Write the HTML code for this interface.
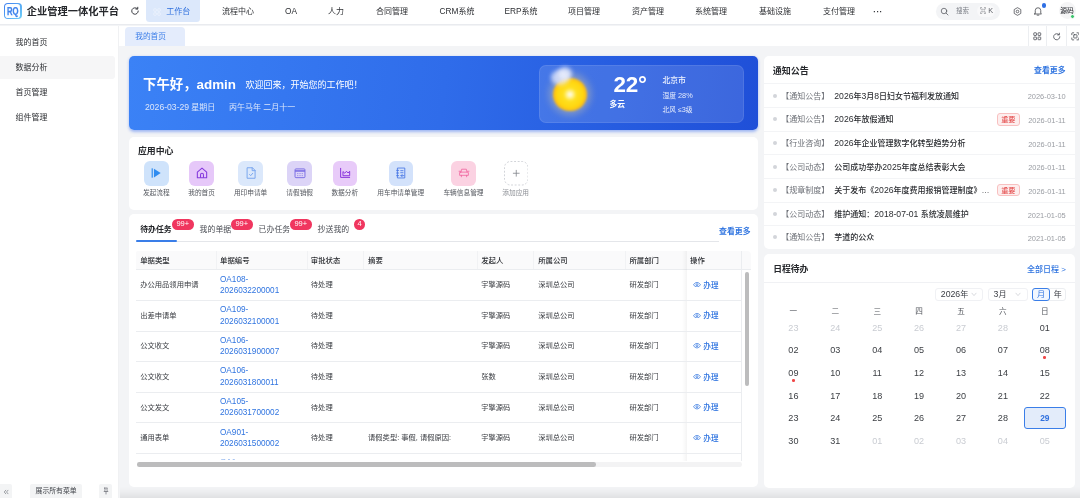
<!DOCTYPE html>
<html lang="zh-CN">
<head>
<meta charset="utf-8">
<title>企业管理一体化平台</title>
<style>
*{box-sizing:border-box;margin:0;padding:0}
html,body{width:1080px;height:498px;overflow:hidden;background:#f3f4f6}
body{font-family:"Liberation Sans","Noto Sans CJK SC",sans-serif;font-size:8px;color:#303133;position:relative}
.abs{position:absolute}
/* header */
#hdr{position:absolute;left:0;top:0;width:1080px;height:25.3px;background:#fff;border-bottom:1px solid #e9ebef}
#logo{position:absolute;left:4.2px;top:2.9px;width:17.5px;height:16.1px;border-radius:4px;background:linear-gradient(135deg,#3b7cf0,#72d2f8);}
#logo i{position:absolute;left:1.3px;top:1.3px;right:1.3px;bottom:1.3px;border-radius:2.8px;background:#fafdff}
#logo b{position:absolute;left:-1px;right:-1px;top:0;text-align:center;font-size:10px;line-height:16.8px;font-weight:bold;font-style:normal;transform:translateY(0.7px) scaleX(.77);color:#3f83ec;-webkit-text-stroke:0.25px #3f83ec}
#title{position:absolute;left:26.8px;top:0.6px;height:22px;line-height:22px;font-size:10.25px;font-weight:bold;color:#26282c;letter-spacing:0px;white-space:nowrap}
.nav .n{font-size:104%}
.nav{position:absolute;top:0.7px;height:22px;line-height:22px;font-size:8px;color:#2d2f33;text-align:center;white-space:nowrap;transform:translateX(-50%)}
#navact{position:absolute;left:146.3px;top:-4px;width:53.7px;height:26px;background:#dce8fb;border-radius:3.5px}
/* sidebar */
#side{position:absolute;left:0;top:25.5px;width:119.3px;height:473px;background:#fff;border-right:0.6px solid #f0f1f3}
.mi{position:absolute;left:0;width:114.5px;height:23.5px;line-height:23.5px;padding-left:15.5px;font-size:8px;color:#2d2f33;border-radius:0 3px 3px 0}
#sidefoot{position:absolute;left:0;top:484px;width:119px;height:14px;background:#fbfbfc;border-top:1px solid #f0f1f3}
/* tabs */
#tabs{position:absolute;left:119px;top:25.5px;width:961px;height:20.5px;background:#fff}
#tab1{position:absolute;left:125.4px;top:27.2px;width:59.2px;height:19px;background:#e4ecfc;border-radius:4px 4px 0 0;color:#3b7de8;font-size:7.7px;line-height:20.4px;padding-left:9.800px}
#tab1:before,#tab1:after{content:"";position:absolute;bottom:0;width:2.5px;height:2.5px}
#tab1:before{left:-2.5px;background:radial-gradient(circle at 0 0,rgba(228,236,252,0) 2.4px,#e4ecfc 2.6px)}
#tab1:after{right:-2.5px;background:radial-gradient(circle at 100% 0,rgba(228,236,252,0) 2.4px,#e4ecfc 2.6px)}
.card{position:absolute;background:#fff;border-radius:5px}
/*EXTRA*/
.ic{position:absolute;top:161.200px;width:24.5px;height:24.500px;border-radius:6px;display:flex;align-items:center;justify-content:center}
.il{position:absolute;top:186.900px;line-height:12px;font-size:6.7px;color:#55585f;white-space:nowrap;transform:translateX(-50%)}
.bdg{position:absolute;top:219.400px;height:10.500px;border-radius:5.300px;background:#f0365f;color:#fff;font-size:7.5px;line-height:10.6px;text-align:center}
.th{position:absolute;top:254.6px;line-height:12px;font-size:7.4px;font-weight:500;color:#2e3035;white-space:nowrap}
.td{position:absolute;line-height:12px;font-size:7.3px;color:#383b40;white-space:nowrap}
.lk{position:absolute;line-height:11.6px;font-size:7.6px;color:#2f74e0;white-space:nowrap}
.sel{top:287.6px;height:13.4px;border:0.7px solid #f0f1f4;border-radius:3px;background:#fff;line-height:12.6px;font-size:8.1px;color:#3a3d43;padding-left:4.6px}
.n{font-size:108%;line-height:0}
.cd{position:absolute;line-height:13px;font-size:8.400px;white-space:nowrap;transform:translateX(-50%)}
/*ENDEXTRA*/</style>
</head>
<body>
<div id="root" style="position:absolute;left:0;top:0;width:1080px;height:498px;will-change:transform">
<div id="hdr">
  <div id="logo"><i></i><b>RQ</b></div>
  <div id="title">企业管理一体化平台</div>
  <svg class="abs" style="left:130px;top:6.1px" width="10" height="10" viewBox="0 0 20 20" fill="none" stroke="#3a3c42" stroke-width="2" stroke-linecap="round" stroke-linejoin="round"><path d="M16.5 10a6.5 6.5 0 1 1-2-4.7"/><path d="M15.5 2.5v3.6h-3.6"/></svg>
  <div id="navact"></div>
  <svg class="abs" style="left:153px;top:7.5px" width="8" height="8" viewBox="0 0 16 16" fill="none" stroke="#eef4fe" stroke-width="1.6"><rect x="1.5" y="1.5" width="5" height="5" rx="1"/><rect x="9.500" y="1.500" width="5" height="5" rx="1"/><rect x="1.500" y="9.500" width="5" height="5" rx="1"/><rect x="9.500" y="9.500" width="5" height="5" rx="1"/></svg>
  <div class="nav" style="left:178.300px;color:#2f70de">工作台</div>
  <div class="nav" style="left:238px">流程中心</div>
  <div class="nav" style="left:291px"><span class="n">OA</span></div>
  <div class="nav" style="left:336px">人力</div>
  <div class="nav" style="left:392px">合同管理</div>
  <div class="nav" style="left:457px"><span class="n">CRM</span>系统</div>
  <div class="nav" style="left:521px"><span class="n">ERP</span>系统</div>
  <div class="nav" style="left:584px">项目管理</div>
  <div class="nav" style="left:648px">资产管理</div>
  <div class="nav" style="left:711px">系统管理</div>
  <div class="nav" style="left:775px">基础设施</div>
  <div class="nav" style="left:839px">支付管理</div>
  <div class="nav" style="left:878px;font-weight:bold;letter-spacing:0.5px">···</div>
  <div class="abs" style="left:936px;top:2.5px;width:64px;height:17px;border-radius:9px;background:#f3f4f6"></div>
  <svg class="abs" style="left:940.2px;top:6.8px" width="9" height="9" viewBox="0 0 18 18" fill="none" stroke="#55585f" stroke-width="1.5" stroke-linecap="round"><circle cx="8" cy="8" r="5.5"/><path d="M12.2 12.2 16 16"/></svg>
  <div class="abs" style="left:956px;top:0;line-height:22px;font-size:6.5px;color:#7d8088">搜索</div>
  <div class="abs" style="left:977px;top:5px;width:18px;height:12px;border-radius:6px;background:#f9f9fa"></div>
  <div class="abs" style="left:979.8px;top:0;line-height:22.5px;font-size:6.6px;color:#62656c">⌘</div>
  <div class="abs" style="left:988.3px;top:0;line-height:22.5px;font-size:6.8px;color:#62656c"><span class="n">K</span></div>
  <svg class="abs" style="left:1013px;top:6.5px" width="9" height="9" viewBox="0 0 18 18" fill="none" stroke="#45474d" stroke-width="1.5" stroke-linejoin="round"><path d="M9 1.3 15.6 5.1v7.8L9 16.7 2.4 12.9V5.1z"/><circle cx="9" cy="9" r="2.6"/></svg>
  <svg class="abs" style="left:1033px;top:6px" width="10" height="10" viewBox="0 0 20 20" fill="none" stroke="#45474d" stroke-width="1.6" stroke-linecap="round" stroke-linejoin="round"><path d="M4.5 14.5V9a5.5 5.500 0 0 1 11 0v5.500l1.500 1.500H3z"/><path d="M8.300 18.300h3.400"/></svg>
  <div class="abs" style="left:1042px;top:3.3px;width:4.4px;height:4.4px;border-radius:50%;background:#2f6fe4"></div>
  <div class="abs" style="left:1058.5px;top:2px;width:17px;height:17px;border-radius:50%;background:#f5f5f6"></div>
  <div class="abs" style="left:1060.3px;top:0;line-height:22.5px;font-size:6.8px;font-weight:500;color:#33353a">源码</div>
  <div class="abs" style="left:1070.2px;top:14.3px;width:4.8px;height:4.8px;border-radius:50%;background:#3fc56f;border:0.500px solid #fff"></div>
</div>

<div id="side">
</div>
<div class="mi" style="top:30.500px">我的首页</div>
<div class="mi" style="top:55.5px;background:#f6f6f7">数据分析</div>
<div class="mi" style="top:80.500px">首页管理</div>
<div class="mi" style="top:105.500px">组件管理</div>
<div class="abs" style="left:0;top:484.4px;width:12.2px;height:13.6px;background:#f3f4f5;border-radius:0 2px 0 0"></div>
<svg class="abs" style="left:3.2px;top:488.6px" width="6" height="6" viewBox="0 0 12 12" fill="none" stroke="#6b6e75" stroke-width="1.300" stroke-linecap="round" stroke-linejoin="round"><path d="M5.500 2.500 2.500 6l3 3.500M10 2.500 7 6l3 3.500"/></svg>
<div class="abs" style="left:30px;top:484.400px;width:52.200px;height:13.600px;background:#f3f4f5;border-radius:2px 2px 0 0;line-height:14.500px;text-align:center;font-size:6.850px;color:#3c3f45">展示所有菜单</div>
<div class="abs" style="left:98.900px;top:484.400px;width:13.300px;height:13.600px;background:#f3f4f5;border-radius:2px 2px 0 0"></div>
<svg class="abs" style="left:101.500px;top:487.300px" width="8" height="8" viewBox="0 0 16 16" fill="none" stroke="#5f6269" stroke-width="1.300" stroke-linejoin="round" stroke-linecap="round"><path d="M5 2h6l-1 1.500v3l2 2.500H4l2-2.500v-3z"/><path d="M8 9v5"/></svg>

<div id="tabs"></div>
<div id="tab1">我的首页</div>
<div class="abs" style="left:1028px;top:26px;width:1px;height:20px;background:#eceef1"></div>
<div class="abs" style="left:1046px;top:26px;width:1px;height:20px;background:#eceef1"></div>
<div class="abs" style="left:1066px;top:26px;width:1px;height:20px;background:#eceef1"></div>
<svg class="abs" style="left:1033px;top:32px" width="8.5" height="8.5" viewBox="0 0 16 16" fill="none" stroke="#4a4d54" stroke-width="1.5"><rect x="1.500" y="1.500" width="5" height="5" rx="0.800"/><rect x="9.500" y="1.500" width="5" height="5" rx="0.800"/><rect x="1.500" y="9.500" width="5" height="5" rx="0.800"/><rect x="9.500" y="9.500" width="5" height="5" rx="0.800"/></svg>
<svg class="abs" style="left:1051.5px;top:31.5px" width="9.5" height="9.5" viewBox="0 0 20 20" fill="none" stroke="#4a4d54" stroke-width="1.7" stroke-linecap="round" stroke-linejoin="round"><path d="M16.500 10a6.500 6.500 0 1 1-2-4.700"/><path d="M15.500 2.500v3.600h-3.600"/></svg>
<svg class="abs" style="left:1070.7px;top:32px" width="8.7" height="8.7" viewBox="0 0 16 16" fill="none" stroke="#4a4d54" stroke-width="1.5" stroke-linecap="round"><path d="M1.500 5V2.500a1 1 0 0 1 1-1H5M11 1.500h2.500a1 1 0 0 1 1 1V5M14.500 11v2.500a1 1 0 0 1-1 1H11M5 14.500H2.500a1 1 0 0 1-1-1V11"/><rect x="5" y="5" width="6" height="6" rx="1"/></svg>

<div id="btm" class="abs" style="left:119.500px;top:487px;width:960.500px;height:11px;background:linear-gradient(180deg,rgba(0,0,0,0) 0%,rgba(0,0,0,.025) 40%,rgba(0,0,0,.075) 100%)"></div>
<!--MAINSTART--><!-- banner -->
<div class="abs" id="banner" style="left:129px;top:56px;width:628.5px;height:74px;border-radius:5px;background:linear-gradient(97deg,#3b82f6 0%,#2f6cea 50%,#1f4fd8 100%);box-shadow:0 1.5px 3px rgba(60,110,240,.45)"></div>
<div class="abs" style="left:143px;top:74.5px;line-height:19px;font-size:13.4px;font-weight:bold;color:#fff;white-space:nowrap">下午好，admin</div>
<div class="abs" style="left:245.5px;top:78px;line-height:15px;font-size:9px;color:#fff;white-space:nowrap">欢迎回来，开始您的工作吧！</div>
<div class="abs" style="left:145px;top:101px;line-height:14px;font-size:8px;color:#dbe6fb;white-space:nowrap"><span class="n">2026-03-29</span> 星期日</div>
<div class="abs" style="left:229px;top:101px;line-height:14px;font-size:8px;color:#dbe6fb;white-space:nowrap">丙午马年 二月十一</div>
<div class="abs" style="left:539px;top:65px;width:205px;height:57.5px;border-radius:7px;background:rgba(255,255,255,.13);border:0.5px solid rgba(255,255,255,.09)"></div>
<div class="abs" style="left:549px;top:73px;width:42px;height:42px;border-radius:50%;background:rgba(255,225,140,.32);filter:blur(3.5px)"></div>
<div class="abs" style="left:553.4px;top:77.500px;width:33.400px;height:33.400px;border-radius:50%;background:radial-gradient(circle,#ffffff 0%,#fff3a0 12%,#ffe020 28%,#ffd60f 56%,#fbb818 70%,#f6a520 82%,#f4a128 100%);filter:blur(1px)"></div>
<div class="abs" style="left:550.500px;top:69.500px;width:18px;height:15px;border-radius:50%;background:rgba(232,236,252,.75);filter:blur(2.200px)"></div>
<div class="abs" style="left:558px;top:66.500px;width:14px;height:13px;border-radius:50%;background:rgba(236,240,253,.8);filter:blur(2.200px)"></div>
<div class="abs" style="left:613.5px;top:71px;line-height:27px;font-size:22.400px;font-weight:bold;color:#fff;white-space:nowrap;letter-spacing:-0.2px">22°</div>
<div class="abs" style="left:609.500px;top:97.600px;line-height:13px;font-size:7.800px;font-weight:bold;color:#fff;white-space:nowrap">多云</div>
<div class="abs" style="left:662.5px;top:73.500px;line-height:13px;font-size:7.8px;font-weight:500;color:#f0f4ff;white-space:nowrap">北京市</div>
<div class="abs" style="left:662.5px;top:89px;line-height:13px;font-size:6.8px;color:#e4ebfc;white-space:nowrap">湿度 <span class="n">28%</span></div>
<div class="abs" style="left:662.5px;top:102.5px;line-height:13px;font-size:6.8px;color:#e4ebfc;white-space:nowrap">北风 ≤<span class="n">3</span>级</div>

<!-- app center -->
<div class="card" style="left:129px;top:136.5px;width:628.5px;height:73px"></div>
<div class="abs" style="left:138px;top:143.500px;line-height:14px;font-size:8.900px;font-weight:bold;color:#26282c;white-space:nowrap">应用中心</div>
<div class="ic" style="left:144px;background:#cfe3fb"><svg viewBox="0 0 24 24" width="14" height="14"><rect x="4.500" y="4" width="2" height="16" fill="#2f8cf0"/><path d="M8.500 4.500 20 12 8.500 19.500z" fill="#2f8cf0"/></svg></div>
<div class="ic" style="left:189.300px;background:#e6c8f9"><svg viewBox="0 0 24 24" width="14" height="14" fill="none" stroke="#8538dd" stroke-width="1.800" stroke-linejoin="round"><path d="M4 10.500 12 3.500l8 7V20H4z"/><path d="M9.500 20v-5a2.500 2.500 0 0 1 5 0v5"/></svg></div>
<div class="ic" style="left:238.300px;background:#dbe8fb"><svg viewBox="0 0 24 24" width="14" height="14" fill="none" stroke="#74a3ee" stroke-width="1.600" stroke-linejoin="round" stroke-linecap="round"><path d="M6 3h8.500L19 7.500V21H6z"/><path d="M14 3v5h5"/><path d="M9.500 14.500l2 2 3.500-4"/></svg></div>
<div class="ic" style="left:287.400px;background:#dcd4f7"><svg viewBox="0 0 24 24" width="14" height="14" fill="none" stroke="#7668e4" stroke-width="1.600" stroke-linejoin="round"><rect x="3.500" y="5" width="17" height="15" rx="1.500"/><path d="M3.500 8.500h17" stroke-width="2.600"/><path d="M7.500 13h1.500M11.300 13h1.500M15 13h1.500M7.500 16.500h1.500M11.300 16.500h1.500M15 16.500h1.500" stroke-width="1.600"/></svg></div>
<div class="ic" style="left:332.500px;background:#e8cbf9"><svg viewBox="0 0 24 24" width="14" height="14" fill="none" stroke="#8a34dc" stroke-width="1.700" stroke-linejoin="round" stroke-linecap="round"><path d="M4.500 4v15.500H20"/><path d="M8.500 16v-6.500l3 2.800 3-3.300 2.800 3 2.700-3V16z"/></svg></div>
<div class="ic" style="left:388.500px;background:#d3e2fb"><svg viewBox="0 0 24 24" width="14" height="14" fill="none" stroke="#4272e4" stroke-width="1.400" stroke-linejoin="round" stroke-linecap="round"><path d="M6.500 3.500h12v17h-12z"/><path d="M4.500 7.500h3.500M4.500 12h3.500M4.500 16.500h3.500"/><path d="M11.500 8h4M11.500 11.500h4"/><path d="M12 16.500h5M14 14.500l-2 2 2 2"/></svg></div>
<div class="ic" style="left:451.300px;background:#fbd2e2"><svg viewBox="0 0 24 24" width="14" height="14" fill="none" stroke="#f0669f" stroke-width="1.400" stroke-linejoin="round" stroke-linecap="round"><path d="M6.800 10.500 8 5.500h8l1.200 5"/><path d="M5.500 10.500h13a1 1 0 0 1 1 1v4.500h-15v-4.500a1 1 0 0 1 1-1z"/><path d="M3.500 9h2.300M18.200 9h2.300M7.500 16v2.500M16.500 16v2.500"/></svg></div>
<div class="ic" style="left:503.500px;background:#fff"><svg viewBox="0 0 24.500 24.500" width="24.500" height="24.500" fill="none"><rect x="0.500" y="0.500" width="23.500" height="23.500" rx="6" stroke="#c6c9cf" stroke-width="0.800" stroke-dasharray="1.900 1.700"/><path d="M12.250 9.300v5.900M9.300 12.250h5.900" stroke="#808389" stroke-width="0.800" stroke-linecap="round"/></svg></div>
<div class="il" style="left:156.300px">发起流程</div>
<div class="il" style="left:201.600px">我的首页</div>
<div class="il" style="left:250.600px">用印申请单</div>
<div class="il" style="left:299.700px">请假销假</div>
<div class="il" style="left:344.800px">数据分析</div>
<div class="il" style="left:400.700px">用车申请单管理</div>
<div class="il" style="left:463.500px">车辆信息管理</div>
<div class="il" style="left:515.700px;color:#8d9096">添加应用</div>
<!-- tasks -->
<div class="card" style="left:129px;top:214.4px;width:628.5px;height:273px"></div>
<div class="abs" style="left:140.2px;top:222.5px;line-height:13px;font-size:7.9px;font-weight:bold;color:#26282c;white-space:nowrap">待办任务</div>
<div class="bdg" style="left:172px;width:21.5px">99+</div>
<div class="abs" style="left:199.6px;top:222.5px;line-height:13px;font-size:7.9px;color:#4a4d54;white-space:nowrap">我的单据</div>
<div class="bdg" style="left:231px;width:21.5px">99+</div>
<div class="abs" style="left:258.6px;top:222.5px;line-height:13px;font-size:7.9px;color:#4a4d54;white-space:nowrap">已办任务</div>
<div class="bdg" style="left:290px;width:21.5px">99+</div>
<div class="abs" style="left:317.6px;top:222.5px;line-height:13px;font-size:7.9px;color:#4a4d54;white-space:nowrap">抄送我的</div>
<div class="bdg" style="left:354.2px;width:11px">4</div>
<div class="abs" style="left:136px;top:241.3px;width:583px;height:0.8px;background:#e4e6ea"></div>
<div class="abs" style="left:136px;top:240px;width:41px;height:2px;background:#3a7ee8;border-radius:1px"></div>
<div class="abs" style="left:719px;top:225px;line-height:13px;font-size:7.9px;font-weight:bold;color:#2f74e0;white-space:nowrap">查看更多</div>
<div class="abs" style="left:136px;top:251px;width:615px;height:18.8px;background:#fafafb;border-radius:2px 4px 0 0"></div>
<div class="th" style="left:140.2px">单据类型</div>
<div class="th" style="left:220px">单据编号</div>
<div class="th" style="left:310.8px">审批状态</div>
<div class="th" style="left:368px">摘要</div>
<div class="th" style="left:481.2px">发起人</div>
<div class="th" style="left:538.2px">所属公司</div>
<div class="th" style="left:629.4px">所属部门</div>
<div class="th" style="left:690px">操作</div>
<div class="abs" style="left:216px;top:251px;width:0.7px;height:18.8px;background:#f1f2f4"></div>
<div class="abs" style="left:306.8px;top:251px;width:0.7px;height:18.8px;background:#f1f2f4"></div>
<div class="abs" style="left:363.3px;top:251px;width:0.7px;height:18.8px;background:#f1f2f4"></div>
<div class="abs" style="left:476.8px;top:251px;width:0.7px;height:18.8px;background:#f1f2f4"></div>
<div class="abs" style="left:533px;top:251px;width:0.7px;height:18.8px;background:#f1f2f4"></div>
<div class="abs" style="left:624.6px;top:251px;width:0.7px;height:18.8px;background:#f1f2f4"></div>
<div class="abs" style="left:136px;top:269.4px;width:615px;height:0.7px;background:#ebedf0"></div>
<div class="abs" style="left:682px;top:250.5px;width:4.5px;height:210px;background:linear-gradient(90deg,rgba(0,0,0,0),rgba(0,0,0,.045))"></div>
<div class="abs" style="left:741.3px;top:250.5px;width:0.7px;height:210px;background:#ebedf0"></div>
<div class="td" style="left:140.2px;top:279.1px">办公用品领用申请</div>
<div class="lk" style="left:220px;top:273.5px"><span class="n">OA108-</span><br><span class="n">2026032200001</span></div>
<div class="td" style="left:310.8px;top:279.1px">待处理</div>
<div class="td" style="left:481.2px;top:279.1px">宇擎源码</div>
<div class="td" style="left:538.2px;top:279.1px">深圳总公司</div>
<div class="td" style="left:629.4px;top:279.1px">研发部门</div>
<svg class="abs" style="left:692.8px;top:282.0px" width="8" height="5.4" viewBox="0 0 16 10.8" fill="none" stroke="#2f74e0" stroke-width="1.5"><path d="M1 5.400C3 2.300 5.500 1 8 1s5 1.300 7 4.400c-2 3.100-4.500 4.400-7 4.400S3 8.500 1 5.400z"/><circle cx="8" cy="5.400" r="2"/></svg>
<div class="td" style="left:703.3px;top:279.7px;color:#2f74e0;font-size:7.6px;font-weight:500">办理</div>
<div class="abs" style="left:136px;top:300.0px;width:606px;height:0.7px;background:#ebedf0"></div>
<div class="td" style="left:140.2px;top:309.7px">出差申请单</div>
<div class="lk" style="left:220px;top:304.1px"><span class="n">OA109-</span><br><span class="n">2026032100001</span></div>
<div class="td" style="left:310.8px;top:309.7px">待处理</div>
<div class="td" style="left:481.2px;top:309.7px">宇擎源码</div>
<div class="td" style="left:538.2px;top:309.7px">深圳总公司</div>
<div class="td" style="left:629.4px;top:309.7px">研发部门</div>
<svg class="abs" style="left:692.8px;top:312.6px" width="8" height="5.4" viewBox="0 0 16 10.8" fill="none" stroke="#2f74e0" stroke-width="1.5"><path d="M1 5.400C3 2.300 5.500 1 8 1s5 1.300 7 4.400c-2 3.100-4.500 4.400-7 4.400S3 8.500 1 5.400z"/><circle cx="8" cy="5.400" r="2"/></svg>
<div class="td" style="left:703.3px;top:310.3px;color:#2f74e0;font-size:7.6px;font-weight:500">办理</div>
<div class="abs" style="left:136px;top:330.6px;width:606px;height:0.7px;background:#ebedf0"></div>
<div class="td" style="left:140.2px;top:340.3px">公文收文</div>
<div class="lk" style="left:220px;top:334.7px"><span class="n">OA106-</span><br><span class="n">2026031900007</span></div>
<div class="td" style="left:310.8px;top:340.3px">待处理</div>
<div class="td" style="left:481.2px;top:340.3px">宇擎源码</div>
<div class="td" style="left:538.2px;top:340.3px">深圳总公司</div>
<div class="td" style="left:629.4px;top:340.3px">研发部门</div>
<svg class="abs" style="left:692.8px;top:343.2px" width="8" height="5.4" viewBox="0 0 16 10.8" fill="none" stroke="#2f74e0" stroke-width="1.5"><path d="M1 5.400C3 2.300 5.500 1 8 1s5 1.300 7 4.400c-2 3.100-4.500 4.400-7 4.400S3 8.500 1 5.400z"/><circle cx="8" cy="5.400" r="2"/></svg>
<div class="td" style="left:703.3px;top:340.9px;color:#2f74e0;font-size:7.6px;font-weight:500">办理</div>
<div class="abs" style="left:136px;top:361.2px;width:606px;height:0.7px;background:#ebedf0"></div>
<div class="td" style="left:140.2px;top:370.9px">公文收文</div>
<div class="lk" style="left:220px;top:365.3px"><span class="n">OA106-</span><br><span class="n">2026031800011</span></div>
<div class="td" style="left:310.8px;top:370.9px">待处理</div>
<div class="td" style="left:481.2px;top:370.9px">张数</div>
<div class="td" style="left:538.2px;top:370.9px">深圳总公司</div>
<div class="td" style="left:629.4px;top:370.9px">研发部门</div>
<svg class="abs" style="left:692.8px;top:373.8px" width="8" height="5.4" viewBox="0 0 16 10.8" fill="none" stroke="#2f74e0" stroke-width="1.5"><path d="M1 5.400C3 2.300 5.500 1 8 1s5 1.300 7 4.400c-2 3.100-4.500 4.400-7 4.400S3 8.500 1 5.400z"/><circle cx="8" cy="5.400" r="2"/></svg>
<div class="td" style="left:703.3px;top:371.5px;color:#2f74e0;font-size:7.6px;font-weight:500">办理</div>
<div class="abs" style="left:136px;top:391.8px;width:606px;height:0.7px;background:#ebedf0"></div>
<div class="td" style="left:140.2px;top:401.5px">公文发文</div>
<div class="lk" style="left:220px;top:395.9px"><span class="n">OA105-</span><br><span class="n">2026031700002</span></div>
<div class="td" style="left:310.8px;top:401.5px">待处理</div>
<div class="td" style="left:481.2px;top:401.5px">宇擎源码</div>
<div class="td" style="left:538.2px;top:401.5px">深圳总公司</div>
<div class="td" style="left:629.4px;top:401.5px">研发部门</div>
<svg class="abs" style="left:692.8px;top:404.4px" width="8" height="5.4" viewBox="0 0 16 10.8" fill="none" stroke="#2f74e0" stroke-width="1.5"><path d="M1 5.400C3 2.300 5.500 1 8 1s5 1.300 7 4.400c-2 3.100-4.500 4.400-7 4.400S3 8.500 1 5.400z"/><circle cx="8" cy="5.400" r="2"/></svg>
<div class="td" style="left:703.3px;top:402.1px;color:#2f74e0;font-size:7.6px;font-weight:500">办理</div>
<div class="abs" style="left:136px;top:422.4px;width:606px;height:0.7px;background:#ebedf0"></div>
<div class="td" style="left:140.2px;top:432.1px">通用表单</div>
<div class="lk" style="left:220px;top:426.5px"><span class="n">OA901-</span><br><span class="n">2026031500002</span></div>
<div class="td" style="left:310.8px;top:432.1px">待处理</div>
<div class="td" style="left:368px;top:432.1px">请假类型: 事假, 请假原因:</div>
<div class="td" style="left:481.2px;top:432.1px">宇擎源码</div>
<div class="td" style="left:538.2px;top:432.1px">深圳总公司</div>
<div class="td" style="left:629.4px;top:432.1px">研发部门</div>
<svg class="abs" style="left:692.8px;top:435.0px" width="8" height="5.4" viewBox="0 0 16 10.8" fill="none" stroke="#2f74e0" stroke-width="1.5"><path d="M1 5.400C3 2.300 5.500 1 8 1s5 1.300 7 4.400c-2 3.100-4.500 4.400-7 4.400S3 8.500 1 5.400z"/><circle cx="8" cy="5.400" r="2"/></svg>
<div class="td" style="left:703.3px;top:432.7px;color:#2f74e0;font-size:7.6px;font-weight:500">办理</div>
<div class="abs" style="left:136px;top:453.0px;width:606px;height:0.7px;background:#ebedf0"></div>
<div class="abs" style="left:220px;top:459.2px;width:16px;height:1.3px;overflow:hidden;opacity:.6"><div style="font-size:7.5px;line-height:11.6px;color:#2f74e0;margin-top:-3px"><span class="n">OA10</span></div></div>
<div class="abs" style="left:137.2px;top:462.4px;width:605px;height:4.6px;background:#f3f3f4;border-radius:2.3px"></div>
<div class="abs" style="left:137.2px;top:462.4px;width:458.5px;height:4.6px;background:#bcbcbd;border-radius:2.3px"></div>
<div class="abs" style="left:745px;top:272px;width:3.8px;height:114px;background:#bcbcbd;border-radius:1.9px"></div>
<!-- notice -->
<div class="card" style="left:764px;top:55.5px;width:310.8px;height:193.5px"></div>
<div class="abs" style="left:772.7px;top:63.500px;line-height:14px;font-size:9px;font-weight:bold;color:#26282c;white-space:nowrap">通知公告</div>
<div class="abs" style="left:1034px;top:64.100px;line-height:13px;font-size:7.900px;font-weight:bold;color:#2f74e0;white-space:nowrap">查看更多</div>
<div class="abs" style="left:764px;top:83.4px;width:310.8px;height:0.7px;background:#f3f4f6"></div>
<div class="abs" style="left:772.7px;top:93.5px;width:4px;height:4px;border-radius:50%;background:#d3d5da"></div>
<div class="abs" style="left:781.3px;top:89.5px;line-height:13px;font-size:8px;color:#6c6f76;white-space:nowrap">【通知公告】</div>
<div class="abs" style="left:834.3px;top:89.5px;line-height:13px;font-size:8px;font-weight:500;color:#2b2d31;white-space:nowrap"><span class="n">2026</span>年<span class="n">3</span>月<span class="n">8</span>日妇女节福利发放通知</div>
<div class="abs" style="right:14.3px;top:90.2px;line-height:13px;font-size:6.900px;color:#9a9da3;white-space:nowrap"><span class="n">2026-03-10</span></div>
<div class="abs" style="left:764px;top:107.0px;width:310.8px;height:0.7px;background:#f3f4f6"></div>
<div class="abs" style="left:772.7px;top:117.2px;width:4px;height:4px;border-radius:50%;background:#d3d5da"></div>
<div class="abs" style="left:781.3px;top:113.2px;line-height:13px;font-size:8px;color:#6c6f76;white-space:nowrap">【通知公告】</div>
<div class="abs" style="left:834.3px;top:113.2px;line-height:13px;font-size:8px;font-weight:500;color:#2b2d31;white-space:nowrap"><span class="n">2026</span>年放假通知</div>
<div class="abs" style="right:14.3px;top:113.9px;line-height:13px;font-size:6.900px;color:#9a9da3;white-space:nowrap"><span class="n">2026-01-11</span></div>
<div class="abs" style="left:997px;top:112.8px;width:22.700px;height:12.800px;border:0.700px solid #f8c0c0;background:#fdeeee;border-radius:3px;line-height:12.200px;text-align:center;font-size:7.200px;color:#e24040">重要</div>
<div class="abs" style="left:764px;top:130.7px;width:310.8px;height:0.7px;background:#f3f4f6"></div>
<div class="abs" style="left:772.7px;top:140.8px;width:4px;height:4px;border-radius:50%;background:#d3d5da"></div>
<div class="abs" style="left:781.3px;top:136.8px;line-height:13px;font-size:8px;color:#6c6f76;white-space:nowrap">【行业咨询】</div>
<div class="abs" style="left:834.3px;top:136.8px;line-height:13px;font-size:8px;font-weight:500;color:#2b2d31;white-space:nowrap"><span class="n">2026</span>年企业管理数字化转型趋势分析</div>
<div class="abs" style="right:14.3px;top:137.5px;line-height:13px;font-size:6.900px;color:#9a9da3;white-space:nowrap"><span class="n">2026-01-11</span></div>
<div class="abs" style="left:764px;top:154.3px;width:310.8px;height:0.7px;background:#f3f4f6"></div>
<div class="abs" style="left:772.7px;top:164.5px;width:4px;height:4px;border-radius:50%;background:#d3d5da"></div>
<div class="abs" style="left:781.3px;top:160.5px;line-height:13px;font-size:8px;color:#6c6f76;white-space:nowrap">【公司动态】</div>
<div class="abs" style="left:834.3px;top:160.5px;line-height:13px;font-size:8px;font-weight:500;color:#2b2d31;white-space:nowrap">公司成功举办<span class="n">2025</span>年度总结表彰大会</div>
<div class="abs" style="right:14.3px;top:161.2px;line-height:13px;font-size:6.900px;color:#9a9da3;white-space:nowrap"><span class="n">2026-01-11</span></div>
<div class="abs" style="left:764px;top:178.0px;width:310.8px;height:0.7px;background:#f3f4f6"></div>
<div class="abs" style="left:772.7px;top:188.1px;width:4px;height:4px;border-radius:50%;background:#d3d5da"></div>
<div class="abs" style="left:781.3px;top:184.1px;line-height:13px;font-size:8px;color:#6c6f76;white-space:nowrap">【规章制度】</div>
<div class="abs" style="left:834.3px;top:184.1px;line-height:13px;font-size:8px;font-weight:500;color:#2b2d31;white-space:nowrap">关于发布《<span class="n">2026</span>年度费用报销管理制度》…</div>
<div class="abs" style="right:14.3px;top:184.8px;line-height:13px;font-size:6.900px;color:#9a9da3;white-space:nowrap"><span class="n">2026-01-11</span></div>
<div class="abs" style="left:997px;top:183.7px;width:22.700px;height:12.800px;border:0.700px solid #f8c0c0;background:#fdeeee;border-radius:3px;line-height:12.200px;text-align:center;font-size:7.200px;color:#e24040">重要</div>
<div class="abs" style="left:764px;top:201.6px;width:310.8px;height:0.7px;background:#f3f4f6"></div>
<div class="abs" style="left:772.7px;top:211.8px;width:4px;height:4px;border-radius:50%;background:#d3d5da"></div>
<div class="abs" style="left:781.3px;top:207.8px;line-height:13px;font-size:8px;color:#6c6f76;white-space:nowrap">【公司动态】</div>
<div class="abs" style="left:834.3px;top:207.8px;line-height:13px;font-size:8px;font-weight:500;color:#2b2d31;white-space:nowrap">维护通知：<span class="n">2018-07-01</span> 系统凌晨维护</div>
<div class="abs" style="right:14.3px;top:208.5px;line-height:13px;font-size:6.900px;color:#9a9da3;white-space:nowrap"><span class="n">2021-01-05</span></div>
<div class="abs" style="left:764px;top:225.3px;width:310.8px;height:0.7px;background:#f3f4f6"></div>
<div class="abs" style="left:772.7px;top:235.4px;width:4px;height:4px;border-radius:50%;background:#d3d5da"></div>
<div class="abs" style="left:781.3px;top:231.4px;line-height:13px;font-size:8px;color:#6c6f76;white-space:nowrap">【通知公告】</div>
<div class="abs" style="left:834.3px;top:231.4px;line-height:13px;font-size:8px;font-weight:500;color:#2b2d31;white-space:nowrap">芋道的公众</div>
<div class="abs" style="right:14.3px;top:232.1px;line-height:13px;font-size:6.900px;color:#9a9da3;white-space:nowrap"><span class="n">2021-01-05</span></div>
<!-- calendar -->
<div class="card" style="left:764px;top:254px;width:310.8px;height:234px"></div>
<div class="abs" style="left:773.2px;top:262.400px;line-height:14px;font-size:8.800px;font-weight:bold;color:#26282c;white-space:nowrap">日程待办</div>
<div class="abs" style="left:1027px;top:263.1px;line-height:13px;font-size:8px;font-weight:500;color:#2f74e0;white-space:nowrap">全部日程 ></div>
<div class="abs" style="left:764px;top:282.200px;width:310.800px;height:0.700px;background:#f0f1f4"></div>
<div class="abs sel" style="left:935.2px;width:47.8px"><span class="n">2026</span>年</div>
<div class="abs sel" style="left:988px;width:39.8px"><span class="n">3</span>月</div>
<svg class="abs" style="left:970.6px;top:292.4px" width="6" height="4.8" viewBox="0 0 10 8" fill="none" stroke="#c3c6cc" stroke-width="1.100" stroke-linecap="round" stroke-linejoin="round"><path d="M1.500 2 5 6l3.500-4"/></svg>
<svg class="abs" style="left:1015.4px;top:292.4px" width="6" height="4.8" viewBox="0 0 10 8" fill="none" stroke="#c3c6cc" stroke-width="1.100" stroke-linecap="round" stroke-linejoin="round"><path d="M1.500 2 5 6l3.500-4"/></svg>
<div class="abs" style="left:1032.4px;top:287.6px;width:33.2px;height:13.4px;border:0.7px solid #eceef1;border-radius:3px;background:#fff"></div>
<div class="abs" style="left:1032.4px;top:287.6px;width:17.4px;height:13.400px;border:0.800px solid #3a7ee8;border-radius:3px;background:#f2f7ff;line-height:12.400px;text-align:center;font-size:8.100px;color:#2f74e0">月</div>
<div class="abs" style="left:1049.800px;top:287.600px;width:15.800px;height:13.400px;line-height:13.800px;text-align:center;font-size:8.100px;color:#3a3d43">年</div>
<div class="cd" style="left:793.4px;top:304.7px;color:#55585f;font-size:7.6px">一</div>
<div class="cd" style="left:835.3px;top:304.7px;color:#55585f;font-size:7.6px">二</div>
<div class="cd" style="left:877.2px;top:304.7px;color:#55585f;font-size:7.6px">三</div>
<div class="cd" style="left:919.1px;top:304.7px;color:#55585f;font-size:7.6px">四</div>
<div class="cd" style="left:961.0px;top:304.7px;color:#55585f;font-size:7.6px">五</div>
<div class="cd" style="left:1002.9px;top:304.7px;color:#55585f;font-size:7.6px">六</div>
<div class="cd" style="left:1044.8px;top:304.7px;color:#55585f;font-size:7.6px">日</div>
<div class="cd" style="left:793.4px;top:321.8px;color:#c9ccd2"><span class="n">23</span></div>
<div class="cd" style="left:835.3px;top:321.8px;color:#c9ccd2"><span class="n">24</span></div>
<div class="cd" style="left:877.2px;top:321.8px;color:#c9ccd2"><span class="n">25</span></div>
<div class="cd" style="left:919.1px;top:321.8px;color:#c9ccd2"><span class="n">26</span></div>
<div class="cd" style="left:961.0px;top:321.8px;color:#c9ccd2"><span class="n">27</span></div>
<div class="cd" style="left:1002.9px;top:321.8px;color:#c9ccd2"><span class="n">28</span></div>
<div class="cd" style="left:1044.8px;top:321.8px;color:#3d4045"><span class="n">01</span></div>
<div class="cd" style="left:793.4px;top:343.8px;color:#3d4045"><span class="n">02</span></div>
<div class="cd" style="left:835.3px;top:343.8px;color:#3d4045"><span class="n">03</span></div>
<div class="cd" style="left:877.2px;top:343.8px;color:#3d4045"><span class="n">04</span></div>
<div class="cd" style="left:919.1px;top:343.8px;color:#3d4045"><span class="n">05</span></div>
<div class="cd" style="left:961.0px;top:343.8px;color:#3d4045"><span class="n">06</span></div>
<div class="cd" style="left:1002.9px;top:343.8px;color:#3d4045"><span class="n">07</span></div>
<div class="cd" style="left:1044.8px;top:343.8px;color:#3d4045"><span class="n">08</span></div>
<div class="cd" style="left:793.4px;top:366.8px;color:#3d4045"><span class="n">09</span></div>
<div class="cd" style="left:835.3px;top:366.8px;color:#3d4045"><span class="n">10</span></div>
<div class="cd" style="left:877.2px;top:366.8px;color:#3d4045"><span class="n">11</span></div>
<div class="cd" style="left:919.1px;top:366.8px;color:#3d4045"><span class="n">12</span></div>
<div class="cd" style="left:961.0px;top:366.8px;color:#3d4045"><span class="n">13</span></div>
<div class="cd" style="left:1002.9px;top:366.8px;color:#3d4045"><span class="n">14</span></div>
<div class="cd" style="left:1044.8px;top:366.8px;color:#3d4045"><span class="n">15</span></div>
<div class="cd" style="left:793.4px;top:390.1px;color:#3d4045"><span class="n">16</span></div>
<div class="cd" style="left:835.3px;top:390.1px;color:#3d4045"><span class="n">17</span></div>
<div class="cd" style="left:877.2px;top:390.1px;color:#3d4045"><span class="n">18</span></div>
<div class="cd" style="left:919.1px;top:390.1px;color:#3d4045"><span class="n">19</span></div>
<div class="cd" style="left:961.0px;top:390.1px;color:#3d4045"><span class="n">20</span></div>
<div class="cd" style="left:1002.9px;top:390.1px;color:#3d4045"><span class="n">21</span></div>
<div class="cd" style="left:1044.8px;top:390.1px;color:#3d4045"><span class="n">22</span></div>
<div class="cd" style="left:793.4px;top:412.3px;color:#3d4045"><span class="n">23</span></div>
<div class="cd" style="left:835.3px;top:412.3px;color:#3d4045"><span class="n">24</span></div>
<div class="cd" style="left:877.2px;top:412.3px;color:#3d4045"><span class="n">25</span></div>
<div class="cd" style="left:919.1px;top:412.3px;color:#3d4045"><span class="n">26</span></div>
<div class="cd" style="left:961.0px;top:412.3px;color:#3d4045"><span class="n">27</span></div>
<div class="cd" style="left:1002.9px;top:412.3px;color:#3d4045"><span class="n">28</span></div>
<div class="abs" style="left:1023.8px;top:407.3px;width:41.8px;height:22px;border:0.8px solid #3a7ee8;background:#e3ecfa;border-radius:3px"></div>
<div class="cd" style="left:1044.8px;top:412.3px;color:#2f70de;font-weight:bold">29</div>
<div class="cd" style="left:793.4px;top:435.1px;color:#3d4045"><span class="n">30</span></div>
<div class="cd" style="left:835.3px;top:435.1px;color:#3d4045"><span class="n">31</span></div>
<div class="cd" style="left:877.2px;top:435.1px;color:#c9ccd2"><span class="n">01</span></div>
<div class="cd" style="left:919.1px;top:435.1px;color:#c9ccd2"><span class="n">02</span></div>
<div class="cd" style="left:961.0px;top:435.1px;color:#c9ccd2"><span class="n">03</span></div>
<div class="cd" style="left:1002.9px;top:435.1px;color:#c9ccd2"><span class="n">04</span></div>
<div class="cd" style="left:1044.8px;top:435.1px;color:#c9ccd2"><span class="n">05</span></div>
<div class="abs" style="left:1043.4px;top:356.2px;width:2.6px;height:2.6px;border-radius:50%;background:#f04848"></div>
<div class="abs" style="left:792.1px;top:379.1px;width:2.6px;height:2.6px;border-radius:50%;background:#f04848"></div>
<!--MAINEND-->
</div>
</body>
</html>
